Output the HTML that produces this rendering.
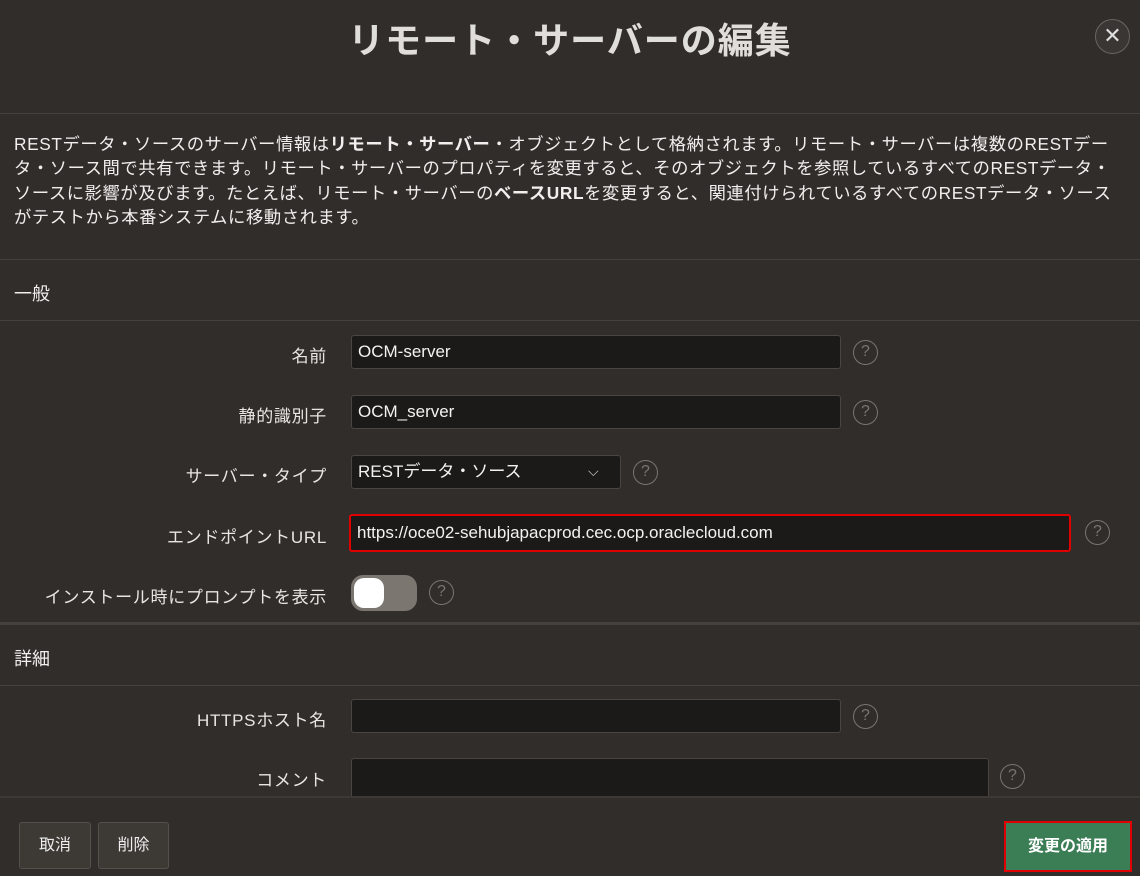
<!DOCTYPE html>
<html><head><meta charset="utf-8"><style>
*{box-sizing:border-box;margin:0;padding:0}
body{width:1140px;height:876px;background:#312d2a;font-family:"Liberation Sans","Noto Sans CJK JP",sans-serif;color:#f1efed;position:relative;overflow:hidden}
.a{position:absolute}
.title{left:0;width:1140px;top:12px;text-align:center;font-size:36px;font-weight:bold;color:#e0dedb;letter-spacing:1px}
.close{left:1095px;top:19px;width:35px;height:35px;border-radius:50%;border:1px solid #6a6560;background:#3a3633;color:#ddd;font-size:22px;text-align:center;line-height:32px}
.hr{left:0;width:1140px;height:1px;background:#46413d}
.desc{left:14px;top:132px;width:1125px;font-size:17.3px;line-height:24.3px;color:#f1efed;white-space:nowrap;letter-spacing:0.6px}
.sec{left:14px;font-size:18px}
.lbl{width:327px;left:0;text-align:right;font-size:17px;color:#e8e6e3;letter-spacing:0.7px}
.inp{background:#1c1a19;border:1px solid #4a4541;border-radius:3px;font-size:17px;padding-left:6px;line-height:32px;color:#f4f2f0}
.help{width:25px;height:25px;border-radius:50%;border:1.5px solid #7b7570;color:#7b7570;font-size:16px;text-align:center;line-height:22px}
.btn{background:#3d3935;border:1px solid #55504b;border-radius:3px;font-size:16px;text-align:center;color:#eee}
</style></head><body>
<div class="a title">リモート・サーバーの編集</div>
<div class="a close">✕</div>
<div class="a hr" style="top:113px"></div>
<div class="a desc">RESTデータ・ソースのサーバー情報は<b>リモート・サーバー</b>・オブジェクトとして格納されます。リモート・サーバーは複数のRESTデー<br>タ・ソース間で共有できます。リモート・サーバーのプロパティを変更すると、そのオブジェクトを参照しているすべてのRESTデータ・<br>ソースに影響が及びます。たとえば、リモート・サーバーの<b>ベースURL</b>を変更すると、関連付けられているすべてのRESTデータ・ソース<br>がテストから本番システムに移動されます。</div>
<div class="a hr" style="top:259px"></div>
<div class="a sec" style="top:280px">一般</div>
<div class="a hr" style="top:320px"></div>

<div class="a lbl" style="top:342px">名前</div>
<div class="a inp" style="left:351px;top:335px;width:490px;height:34px">OCM-server</div>
<div class="a help" style="left:853px;top:340px">?</div>

<div class="a lbl" style="top:402px">静的識別子</div>
<div class="a inp" style="left:351px;top:395px;width:490px;height:34px">OCM_server</div>
<div class="a help" style="left:853px;top:400px">?</div>

<div class="a lbl" style="top:462px">サーバー・タイプ</div>
<div class="a inp" style="left:351px;top:455px;width:270px;height:34px">RESTデータ・ソース<span style="position:absolute;left:236px;top:-1px;font-size:14px;color:#ccc">⌵</span></div>
<div class="a help" style="left:633px;top:460px">?</div>

<div class="a lbl" style="top:523px">エンドポイントURL</div>
<div class="a inp" style="left:349px;top:514px;width:722px;height:38px;border:2px solid #e00000;line-height:34px">https://oce02-sehubjapacprod.cec.ocp.oraclecloud.com</div>
<div class="a help" style="left:1085px;top:520px">?</div>

<div class="a lbl" style="top:583px">インストール時にプロンプトを表示</div>
<div class="a" style="left:351px;top:575px;width:66px;height:36px;border-radius:12px;background:#7c7670"><div class="a" style="left:3px;top:3px;width:30px;height:30px;border-radius:10px;background:#fff"></div></div>
<div class="a help" style="left:429px;top:580px">?</div>

<div class="a" style="left:0;top:622px;width:1140px;height:3px;background:#46413d"></div>
<div class="a sec" style="top:645px">詳細</div>
<div class="a hr" style="top:685px"></div>

<div class="a lbl" style="top:706px">HTTPSホスト名</div>
<div class="a inp" style="left:351px;top:699px;width:490px;height:34px"></div>
<div class="a help" style="left:853px;top:704px">?</div>

<div class="a lbl" style="top:766px">コメント</div>
<div class="a inp" style="left:351px;top:758px;width:638px;height:50px"></div>
<div class="a help" style="left:1000px;top:764px">?</div>

<div class="a" style="left:0;top:796px;width:1140px;height:80px;background:#312d2a;border-top:2px solid #3d3935"></div>
<div class="a btn" style="left:19px;top:822px;width:72px;height:47px;line-height:45px">取消</div>
<div class="a btn" style="left:98px;top:822px;width:71px;height:47px;line-height:45px">削除</div>
<div class="a" style="left:1004px;top:821px;width:128px;height:51px;border:2px solid #e00000;background:#3b7d55;color:#fff;font-weight:bold;font-size:16px;text-align:center;line-height:47px">変更の適用</div>
</body></html>
